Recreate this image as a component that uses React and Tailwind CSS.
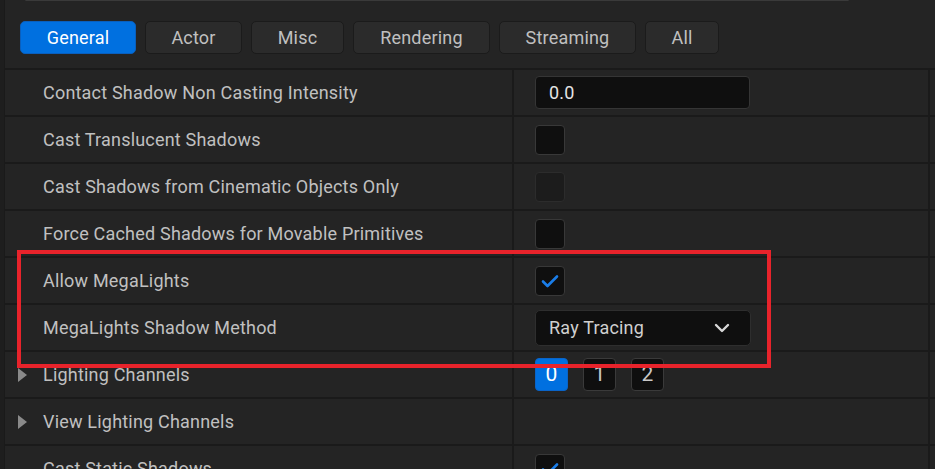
import React from "react";

const tabs = [
  { label: "General", w: "w-[116px]", active: true },
  { label: "Actor", w: "w-[97px]" },
  { label: "Misc", w: "w-[93px]" },
  { label: "Rendering", w: "w-[137px]" },
  { label: "Streaming", w: "w-[137px]" },
  { label: "All", w: "w-[74px]" },
];

function Check({ checked, disabled }) {
  return (
    <div
      className={`flex h-[30px] w-[30px] items-center justify-center rounded-[4px] border ${
        disabled ? "border-[#2c2c2c] bg-[#1c1c1c]" : "border-[#383838] bg-[#0f0f0f]"
      }`}
    >
      {checked && (
        <svg width="18" height="14" viewBox="0 0 18 14" fill="none">
          <path d="M2 7.5 L6.5 12 L16 2.5" stroke="#1a7de8" strokeWidth="2.6" strokeLinecap="round" strokeLinejoin="round" />
        </svg>
      )}
    </div>
  );
}

function Arrow() {
  return (
    <svg width="10" height="16" viewBox="0 0 10 16" className="absolute left-[13px]">
      <path d="M0 1 L9 8 L0 15 Z" fill="#8a8a8a" />
    </svg>
  );
}

function Channels() {
  return (
    <div className="flex gap-[15px]">
      {["0", "1", "2"].map((n, i) => (
        <div
          key={n}
          className={`flex h-[33px] w-[33px] items-center justify-center rounded-[4px] border text-[21px] ${
            i === 0 ? "border-[#0a64c8] bg-[#0070e0] text-white" : "border-[#3a3a3a] bg-[#0f0f0f] text-[#c8c8c8]"
          }`}
        >
          {n}
        </div>
      ))}
    </div>
  );
}

const rows = [
  {
    name: "Contact Shadow Non Casting Intensity",
    value: (
      <div className="flex h-[33px] w-[215px] items-center rounded-[4px] border border-[#353535] bg-[#0f0f0f] px-[13px] text-[#e4e4e4]">
        0.0
      </div>
    ),
  },
  { name: "Cast Translucent Shadows", value: <Check /> },
  { name: "Cast Shadows from Cinematic Objects Only", value: <Check disabled /> },
  { name: "Force Cached Shadows for Movable Primitives", value: <Check /> },
  { name: "Allow MegaLights", value: <Check checked /> },
  {
    name: "MegaLights Shadow Method",
    value: (
      <div className="flex h-[36px] w-[216px] items-center justify-between rounded-[5px] border border-[#2e2e2e] bg-[#0f0f0f] pl-[13px] pr-[20px] text-[#d0d0d0]">
        <span>Ray Tracing</span>
        <svg width="16" height="10" viewBox="0 0 16 10" fill="none">
          <path d="M2 2 L8 8 L14 2" stroke="#d8d8d8" strokeWidth="2.4" strokeLinecap="round" strokeLinejoin="round" />
        </svg>
      </div>
    ),
  },
  { name: "Lighting Channels", arrow: true, value: <Channels /> },
  { name: "View Lighting Channels", arrow: true, value: null },
  { name: "Cast Static Shadows", value: <Check checked /> },
];

export default function App() {
  return (
    <div
      className="relative flex h-[469px] w-[935px] overflow-hidden bg-[#242424] text-[18px] tracking-[0.2px] text-[#c0c0c0]"
      style={{ fontFamily: "Roboto, 'Noto Sans', sans-serif" }}
    >
      <div className="w-[5px] shrink-0 border-r border-[#1a1a1a] bg-[#1e1e1e]" />
      <div className="flex flex-1 flex-col">
        <div className="ml-[20px] mr-[86px] h-[3px] rounded-b-[10px] border-b border-[#3a3a3a] bg-[#0f0f0f]" />
        <div className="mt-[20px] flex gap-[9px] pl-[15px]">
          {tabs.map((t) => (
            <div
              key={t.label}
              className={`flex h-[33px] ${t.w} items-center justify-center rounded-[5px] border ${
                t.active ? "border-[#0a5fbd] bg-[#0070e0] text-white" : "border-[#1b1b1b] bg-[#2b2b2b] text-[#c0c0c0]"
              }`}
            >
              {t.label}
            </div>
          ))}
        </div>
        <div className="mt-[14px] border-t-2 border-[#1a1a1a]">
          {rows.map((r) => (
            <div key={r.name} className="flex h-[47px] border-b-2 border-[#1a1a1a]">
              <div className="relative flex w-[509px] shrink-0 items-center border-r-2 border-[#1a1a1a] pl-[38px]">
                {r.arrow && <Arrow />}
                {r.name}
              </div>
              <div className="flex w-[416px] shrink-0 items-center border-r-2 border-[#1a1a1a] pl-[21px]">
                {r.value}
              </div>
              <div className="flex-1" />
            </div>
          ))}
        </div>
      </div>
      <div className="pointer-events-none absolute left-[17px] top-[250px] h-[118px] w-[754px] border-4 border-[#e8232b]" />
    </div>
  );
}
